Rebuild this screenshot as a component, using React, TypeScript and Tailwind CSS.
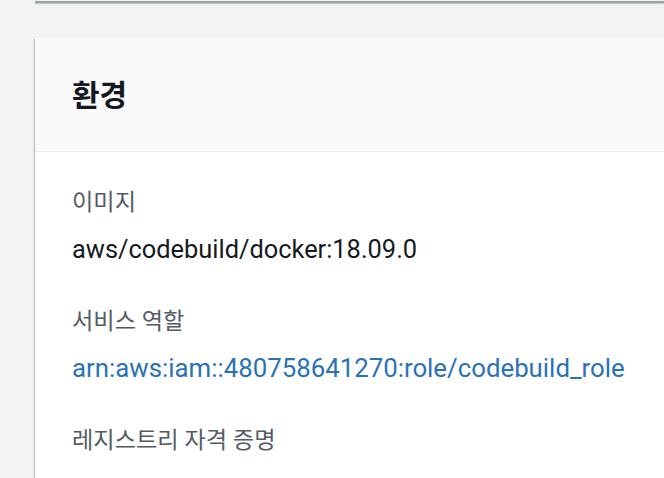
import React from 'react';

const font = "font-['Roboto','Noto_Sans_CJK_KR',sans-serif]";

interface FieldProps {
  label: string;
  value: string;
  link?: boolean;
}

const Field: React.FC<FieldProps> = ({ label, value, link }) => (
  <div className="flex flex-col">
    <div className="text-[23.2px] leading-[28px] text-[#545b64]">{label}</div>
    {value && (
      <div
        className={`mt-[17px] leading-[32px] ${link ? 'text-[25.8px] text-[#2a72b8]' : 'text-[25.4px] text-[#16191f]'}`}
      >
        {value}
      </div>
    )}
  </div>
);

const App: React.FC = () => {
  return (
    <div className={`h-[478px] w-full overflow-hidden bg-[#f2f3f3] ${font}`}>
      {/* bottom edge of previous panel */}
      <div className="ml-[35px] h-[3px] bg-[#f2f3f3] border-b-2 border-[#9aa3a4] shadow-[0_1px_1px_0_rgba(0,28,36,0.2)]" />

      <div className="ml-[35px] mt-[35px] bg-white shadow-[0_1px_1px_0_rgba(0,28,36,0.3),-1px_1px_1px_0_rgba(0,28,36,0.2)]">
        <div className="h-[114px] flex items-center bg-[#fafafa] border-b border-[#eaeded] pl-[37px]">
          <h2 className="text-[30px] font-bold text-[#16191f] leading-none pt-[2px]">환경</h2>
        </div>
        <div className="pl-[37px] pt-[36px] flex flex-col gap-[42px]">
          <Field label="이미지" value="aws/codebuild/docker:18.09.0" />
          <Field label="서비스 역할" value="arn:aws:iam::480758641270:role/codebuild_role" link />
          <Field label="레지스트리 자격 증명" value="" />
        </div>
        <div className="h-[60px]" />
      </div>
    </div>
  );
};

export default App;
